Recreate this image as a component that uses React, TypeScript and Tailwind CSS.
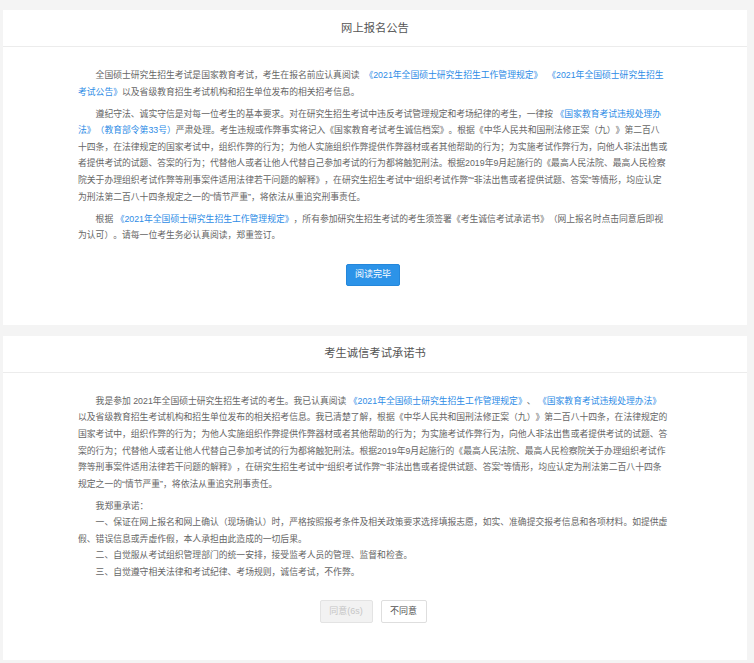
import React from 'react';

const FONT = 'font-["Liberation_Sans","Noto_Sans_CJK_SC",sans-serif]';

function Link({ children }: { children: React.ReactNode }) {
  return <a className="text-[#2e8ce6] cursor-pointer">{children}</a>;
}

function Card({ title, children }: { title: string; children: React.ReactNode }) {
  return (
    <section className="bg-white">
      <header className="h-[37px] border-b border-[#ececec] flex items-center justify-center">
        <h2 className="text-[11.3px] text-[#555]">{title}</h2>
      </header>
      <div className="w-[590px] ml-[75px] pt-[20px] text-[8.8px] leading-[16.6px] text-[#666] [text-spacing-trim:space-all]">
        {children}
      </div>
    </section>
  );
}

export default function App() {
  return (
    <div className={`min-h-screen bg-[#f4f4f4] pt-[10px] pl-[3px] pr-[7px] ${FONT}`}>
      <div className="flex flex-col gap-[11px]">
        {/* 报名公告 */}
        <Card title="网上报名公告">
          <p className="indent-[2em] mb-[5.4px]">
            全国硕士研究生招生考试是国家教育考试，考生在报名前应认真阅读{'\u00a0'} <Link>《2021年全国硕士研究生招生工作管理规定》</Link>{'\u00a0'} <Link>《2021年全国硕士研究生招生考试公告》</Link>以及省级教育招生考试机构和招生单位发布的相关招考信息。
          </p>
          <p className="indent-[2em] mb-[5.4px]">
            遵纪守法、诚实守信是对每一位考生的基本要求。对在研究生招生考试中违反考试管理规定和考场纪律的考生，一律按 <Link>《国家教育考试违规处理办法》（教育部令第33号）</Link>严肃处理。考生违规或作弊事实将记入《国家教育考试考生诚信档案》。根据《中华人民共和国刑法修正案（九）》第二百八十四条，在法律规定的国家考试中，组织作弊的行为；为他人实施组织作弊提供作弊器材或者其他帮助的行为；为实施考试作弊行为，向他人非法出售或者提供考试的试题、答案的行为；代替他人或者让他人代替自己参加考试的行为都将触犯刑法。根据2019年9月起施行的《最高人民法院、最高人民检察院关于办理组织考试作弊等刑事案件适用法律若干问题的解释》，在研究生招生考试中“组织考试作弊”“非法出售或者提供试题、答案”等情形，均应认定为刑法第二百八十四条规定之一的“情节严重”，将依法从重追究刑事责任。
          </p>
          <p className="indent-[2em]">
            根据 <Link>《2021年全国硕士研究生招生工作管理规定》</Link>，所有参加研究生招生考试的考生须签署《考生诚信考试承诺书》（网上报名时点击同意后即视为认可）。请每一位考生务必认真阅读，郑重签订。
          </p>
          <div className="flex justify-center pt-[20px] pb-[39px]">
            <button className="w-[54px] h-[22px] rounded-[2px] bg-[#2c93e8] border border-[#2487db] text-white text-[9px]">
              阅读完毕
            </button>
          </div>
        </Card>

        {/* 诚信承诺书 */}
        <Card title="考生诚信考试承诺书">
          <p className="indent-[2em] mb-[5.4px]">
            我是参加 2021年全国硕士研究生招生考试的考生。我已认真阅读 <Link>《2021年全国硕士研究生招生工作管理规定》</Link>、 <Link>《国家教育考试违规处理办法》</Link>以及省级教育招生考试机构和招生单位发布的相关招考信息。我已清楚了解，根据《中华人民共和国刑法修正案（九）》第二百八十四条，在法律规定的国家考试中，组织作弊的行为；为他人实施组织作弊提供作弊器材或者其他帮助的行为；为实施考试作弊行为，向他人非法出售或者提供考试的试题、答案的行为；代替他人或者让他人代替自己参加考试的行为都将触犯刑法。根据2019年9月起施行的《最高人民法院、最高人民检察院关于办理组织考试作弊等刑事案件适用法律若干问题的解释》，在研究生招生考试中“组织考试作弊”“非法出售或者提供试题、答案”等情形，均应认定为刑法第二百八十四条规定之一的“情节严重”，将依法从重追究刑事责任。
          </p>
          <p className="indent-[2em]">我郑重承诺：</p>
          <p className="indent-[2em]">
            一、保证在网上报名和网上确认（现场确认）时，严格按照报考条件及相关政策要求选择填报志愿，如实、准确提交报考信息和各项材料。如提供虚假、错误信息或弄虚作假，本人承担由此造成的一切后果。
          </p>
          <p className="indent-[2em]">二、自觉服从考试组织管理部门的统一安排，接受监考人员的管理、监督和检查。</p>
          <p className="indent-[2em]">三、自觉遵守相关法律和考试纪律、考场规则，诚信考试，不作弊。</p>
          <div className="flex justify-center gap-[8px] pt-[19px] pb-[37px]">
            <button disabled className="w-[53px] h-[23px] rounded-[2px] bg-[#f2f2f2] border border-[#e3e3e3] text-[#c6c6c6] text-[9px]">
              同意(6s)
            </button>
            <button className="w-[46px] h-[23px] rounded-[2px] bg-white border border-[#dedede] text-[#555] text-[9px]">
              不同意
            </button>
          </div>
        </Card>
      </div>
    </div>
  );
}
